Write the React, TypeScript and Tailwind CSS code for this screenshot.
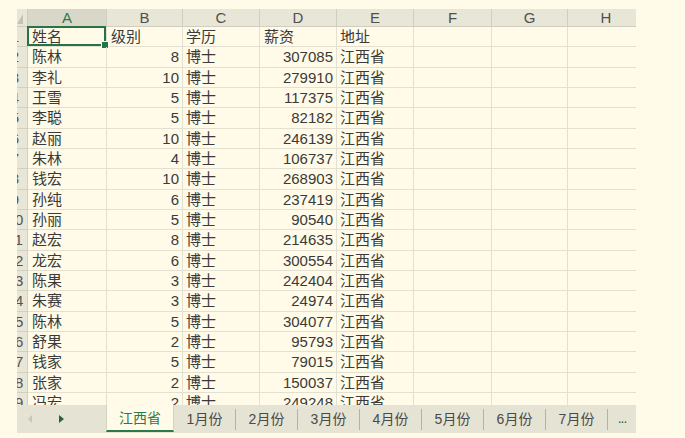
import React from "react";

const cols = [
  { l: "A", w: "w-[79px]" },
  { l: "B", w: "w-[76px]" },
  { l: "C", w: "w-[77px]" },
  { l: "D", w: "w-[77px]" },
  { l: "E", w: "w-[77px]" },
  { l: "F", w: "w-[78px]" },
  { l: "G", w: "w-[76px]" },
  { l: "H", w: "w-[77px]" },
];

const data: [string, string, string, string, string][] = [
  ["姓名", "级别", "学历", "薪资", "地址"],
  ["陈林", "8", "博士", "307085", "江西省"],
  ["李礼", "10", "博士", "279910", "江西省"],
  ["王雪", "5", "博士", "117375", "江西省"],
  ["李聪", "5", "博士", "82182", "江西省"],
  ["赵丽", "10", "博士", "246139", "江西省"],
  ["朱林", "4", "博士", "106737", "江西省"],
  ["钱宏", "10", "博士", "268903", "江西省"],
  ["孙纯", "6", "博士", "237419", "江西省"],
  ["孙丽", "5", "博士", "90540", "江西省"],
  ["赵宏", "8", "博士", "214635", "江西省"],
  ["龙宏", "6", "博士", "300554", "江西省"],
  ["陈果", "3", "博士", "242404", "江西省"],
  ["朱赛", "3", "博士", "24974", "江西省"],
  ["陈林", "5", "博士", "304077", "江西省"],
  ["舒果", "2", "博士", "95793", "江西省"],
  ["钱家", "5", "博士", "79015", "江西省"],
  ["张家", "2", "博士", "150037", "江西省"],
  ["冯宏", "2", "博士", "249248", "江西省"],
];

const tabs = ["1月份", "2月份", "3月份", "4月份", "5月份", "6月份", "7月份"];

const cellBase =
  "h-full shrink-0 border-r border-b border-[#e3e0d1] flex items-center overflow-hidden whitespace-nowrap";

function Row({ n, r }: { n: number; r: [string, string, string, string, string] }) {
  const isHeaderRow = n === 1;
  return (
    <div className="flex h-[20.33px] shrink-0">
      <div className="w-[11px] h-full shrink-0 overflow-hidden bg-[#e8e6d7] border-r border-b border-[#d2d0c1] flex items-center">
        <div className="w-[24px] shrink-0 -ml-[14px] text-center text-[15px] text-[#555]">{n}</div>
      </div>
      <div className={`${cols[0].w} ${cellBase} relative overflow-visible pl-[4px]`}>
        {r[0]}
        {isHeaderRow && (
          <div className="absolute -left-[1px] -top-[1px] right-0 bottom-0 border-2 border-[#257347] pointer-events-none">
            <div className="absolute -right-[4px] -bottom-[4px] w-[6px] h-[6px] bg-[#257347] outline outline-1 outline-[#fffbe8]" />
          </div>
        )}
      </div>
      <div className={`${cols[1].w} ${cellBase} ${isHeaderRow ? "justify-start pl-[4px]" : "justify-end pr-[3px]"}`}>{r[1]}</div>
      <div className={`${cols[2].w} ${cellBase} pl-[3px]`}>{r[2]}</div>
      <div className={`${cols[3].w} ${cellBase} ${isHeaderRow ? "justify-start pl-[4px]" : "justify-end pr-[3px]"}`}>{r[3]}</div>
      <div className={`${cols[4].w} ${cellBase} pl-[3px]`}>{r[4]}</div>
      <div className={`${cols[5].w} ${cellBase}`} />
      <div className={`${cols[6].w} ${cellBase}`} />
      <div className={`${cols[7].w} ${cellBase}`} />
    </div>
  );
}

export default function App() {
  return (
    <div className="w-[685px] h-[438px] bg-[#fffbe8] pl-[17px] pt-[9px] font-['Liberation_Sans','Noto_Sans_CJK_SC',sans-serif] text-[15px] leading-none text-[#3a3a3a]">
      <div className="w-[619px] h-[424px] flex flex-col overflow-hidden">
        <div className="h-[396px] shrink-0 overflow-hidden flex flex-col">
          {/* column header */}
          <div className="flex h-[18px] shrink-0">
            <div className="w-[11px] h-full shrink-0 bg-[#e8e6d7] border-r border-b border-[#cfcdbe] relative overflow-hidden">
              <svg className="absolute left-0 top-[4px]" width="8" height="11" viewBox="0 0 8 11">
                <polygon points="0,11 6,11 6,1" fill="#c4c2b4" />
              </svg>
            </div>
            {cols.map((c, i) => (
              <div
                key={c.l}
                className={`${c.w} h-full shrink-0 flex items-center justify-center border-r border-b border-[#d0cec0] ${
                  i === 0 ? "bg-[#d9d7c8] text-[#2d7a4c]" : "bg-[#e8e6d7] text-[#505050]"
                }`}
              >
                {c.l}
              </div>
            ))}
          </div>
          {data.map((r, i) => (
            <Row key={i} n={i + 1} r={r} />
          ))}
        </div>
        {/* sheet tabs */}
        <div className="h-[28px] shrink-0 bg-[#e5e3d4] flex items-start text-[14px] text-[#4a4a4a]">
          <div className="w-[89px] h-full shrink-0 flex items-center">
            <svg className="ml-[11px]" width="4" height="8" viewBox="0 0 4 8">
              <polygon points="4,0 4,8 0,4" fill="#c9c7b9" />
            </svg>
            <svg className="ml-[27px]" width="5" height="8" viewBox="0 0 5 8">
              <polygon points="0,0 0,8 5,4" fill="#2e5d48" />
            </svg>
          </div>
          <div className="w-[68px] h-[27px] shrink-0 bg-[#fffbe8] border-x border-[#d4d2c3] border-b-2 border-b-[#2b7a4b] flex items-center justify-center text-[#2b7a4b]">
            江西省
          </div>
          {tabs.map((t) => (
            <div key={t} className="w-[62px] h-full shrink-0 flex items-center">
              <div className="flex-1 text-center">{t}</div>
              <div className="w-px h-[21px] bg-[#b3b1a4]" />
            </div>
          ))}
          <div className="flex-1 h-full flex items-center justify-center text-[#3a5a48] tracking-[-1px] pb-[3px]">...</div>
        </div>
      </div>
    </div>
  );
}
